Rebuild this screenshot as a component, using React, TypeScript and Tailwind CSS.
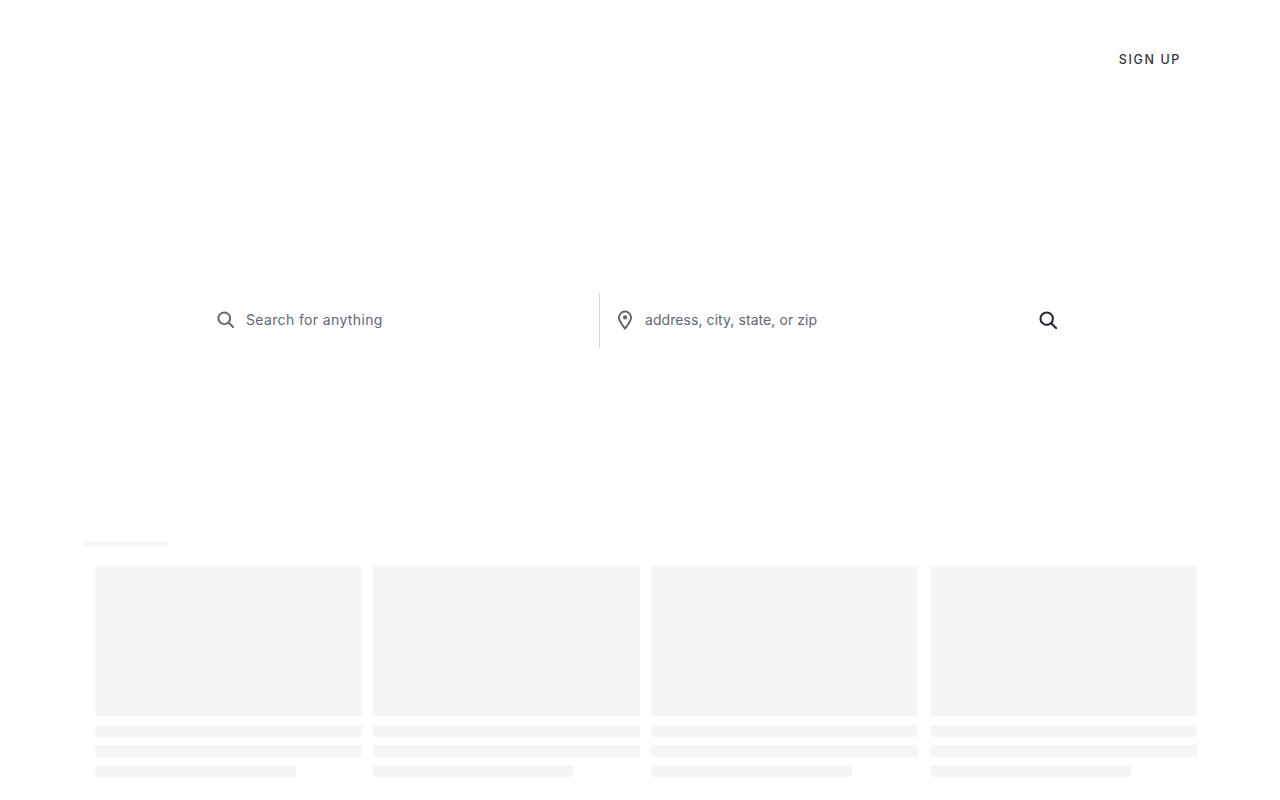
import React from 'react';

const cards = [0, 1, 2, 3];

// Magnifier used in both search fields
const SearchIcon = ({ className }: { className: string }) => (
  <svg viewBox="0 0 18 18" fill="none" stroke="currentColor" strokeWidth="2.1" className={className}>
    <circle cx="7.7" cy="7.7" r="6.2" />
    <path d="M12.4 12.4 L17 17" strokeLinecap="round" />
  </svg>
);

const PinIcon = () => (
  <svg viewBox="0 0 16 20" fill="none" stroke="currentColor" strokeWidth="2" className="mb-[2px] w-[16px] h-[20px] text-[#63666f]">
    <path d="M8 18.6 C5.8 15.6 2 11.6 2 7.6 A6 6 0 0 1 14 7.6 C14 11.6 10.2 15.6 8 18.6 Z" strokeLinejoin="round" />
    <circle cx="8" cy="7.4" r="2.1" fill="currentColor" stroke="none" />
  </svg>
);

const SkeletonCard = () => (
  <div className="flex flex-col">
    <div className="h-[150px] bg-[#f4f5f7]" />
    <div className="mt-[9px] h-[12px] rounded-l-[3px] bg-[#f4f5f6]" />
    <div className="mt-[8px] h-[12px] rounded-l-[3px] bg-[#f4f5f6]" />
    <div className="mt-[8px] h-[12px] w-[201px] rounded-[3px] bg-[#f4f5f6]" />
  </div>
);

export default function App() {
  return (
    <div className="h-[800px] overflow-hidden bg-white font-['Inter',sans-serif]">
      <header className="flex justify-end pt-[51px] pr-[99px]">
        <a className="text-[12.5px] leading-[17px] font-medium tracking-[0.13em] text-[#33353c]">SIGN UP</a>
      </header>

      <div className="mt-[225px] ml-[217px] flex h-[55px] w-[841px] items-center">
        <div className="flex w-[382px] items-center pb-[2px]">
          <SearchIcon className="w-[17px] h-[17px] text-[#63666f]" />
          <span className="ml-[12px] text-[14px] tracking-[0.36px] text-[#63666f]">Search for anything</span>
        </div>
        <div className="flex h-full flex-1 items-center border-l border-[#d5d6d9] pl-[17px]">
          <PinIcon />
          <span className="ml-[12px] pb-[2px] text-[14px] tracking-[0.07px] text-[#63666f]">address, city, state, or zip</span>
          <SearchIcon className="ml-auto mr-[1px] mb-[2px] w-[18px] h-[18px] text-[#2a2c33]" />
        </div>
      </div>

      <div className="mt-[193px] ml-[83px] h-[5px] w-[85px] bg-[#f4f5f7]" />

      <div className="mt-[20px] ml-[94.8px] grid w-[1102px] grid-cols-4 gap-x-[11.33px]">
        {cards.map((c) => (
          <SkeletonCard key={c} />
        ))}
      </div>
    </div>
  );
}
